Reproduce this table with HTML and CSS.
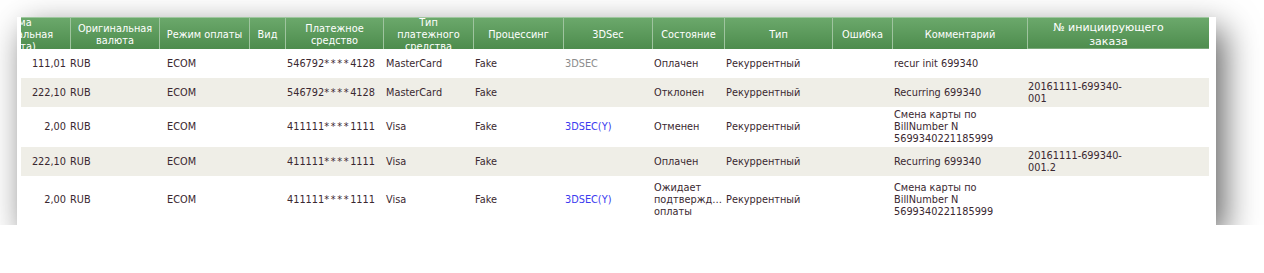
FILE: index.html
```html
<!DOCTYPE html>
<html lang="ru">
<head>
<meta charset="utf-8">
<title>Платежи</title>
<link rel="stylesheet" href="styles.css">
</head>
<body>
<div class="shot">
  <div class="table">
    <div class="head">
      <div class="th th-first"><span class="th-first-inner">Сумма (оригинальная валюта)</span></div>
      <div class="th">Оригинальная валюта</div>
      <div class="th">Режим оплаты</div>
      <div class="th">Вид</div>
      <div class="th">Платежное средство</div>
      <div class="th">Тип платежного средства</div>
      <div class="th">Процессинг</div>
      <div class="th">3DSec</div>
      <div class="th">Состояние</div>
      <div class="th">Тип</div>
      <div class="th">Ошибка</div>
      <div class="th">Комментарий</div>
      <div class="th th-order">№ инициирующего заказа</div>
    </div>
    <div class="body">
      <div class="row">
        <div class="td c-amount">111,01</div>
        <div class="td c-cur">RUB</div>
        <div class="td c-mode">ECOM</div>
        <div class="td"></div>
        <div class="td">546792<span class="mask">****</span>4128</div>
        <div class="td c-type">MasterCard</div>
        <div class="td">Fake</div>
        <div class="td sec-off">3DSEC</div>
        <div class="td">Оплачен</div>
        <div class="td">Рекуррентный</div>
        <div class="td"></div>
        <div class="td">recur init 699340</div>
        <div class="td c-order"></div>
      </div>
      <div class="row alt">
        <div class="td c-amount">222,10</div>
        <div class="td c-cur">RUB</div>
        <div class="td c-mode">ECOM</div>
        <div class="td"></div>
        <div class="td">546792<span class="mask">****</span>4128</div>
        <div class="td c-type">MasterCard</div>
        <div class="td">Fake</div>
        <div class="td"></div>
        <div class="td">Отклонен</div>
        <div class="td">Рекуррентный</div>
        <div class="td"></div>
        <div class="td">Recurring 699340</div>
        <div class="td c-order">20161111-699340-001</div>
      </div>
      <div class="row">
        <div class="td c-amount">2,00</div>
        <div class="td c-cur">RUB</div>
        <div class="td c-mode">ECOM</div>
        <div class="td"></div>
        <div class="td">411111<span class="mask">****</span>1111</div>
        <div class="td c-type">Visa</div>
        <div class="td">Fake</div>
        <div class="td sec-on">3DSEC(Y)</div>
        <div class="td">Отменен</div>
        <div class="td">Рекуррентный</div>
        <div class="td"></div>
        <div class="td">Смена карты по BillNumber N 5699340221185999</div>
        <div class="td c-order"></div>
      </div>
      <div class="row alt">
        <div class="td c-amount">222,10</div>
        <div class="td c-cur">RUB</div>
        <div class="td c-mode">ECOM</div>
        <div class="td"></div>
        <div class="td">411111<span class="mask">****</span>1111</div>
        <div class="td c-type">Visa</div>
        <div class="td">Fake</div>
        <div class="td"></div>
        <div class="td">Оплачен</div>
        <div class="td">Рекуррентный</div>
        <div class="td"></div>
        <div class="td">Recurring 699340</div>
        <div class="td c-order">20161111-699340-001.2</div>
      </div>
      <div class="row tall">
        <div class="td c-amount">2,00</div>
        <div class="td c-cur">RUB</div>
        <div class="td c-mode">ECOM</div>
        <div class="td"></div>
        <div class="td">411111<span class="mask">****</span>1111</div>
        <div class="td c-type">Visa</div>
        <div class="td">Fake</div>
        <div class="td sec-on">3DSEC(Y)</div>
        <div class="td c-state"><span class="line">Ожидает</span><span class="line clip">подтверждения</span><span class="line">оплаты</span></div>
        <div class="td">Рекуррентный</div>
        <div class="td"></div>
        <div class="td">Смена карты по BillNumber N 5699340221185999</div>
        <div class="td c-order"></div>
      </div>
    </div>
  </div>
</div>
</body>
</html>
```

FILE: styles.css
```css
html, body {
  margin: 0;
  padding: 0;
  background: #ffffff;
}

body {
  font-family: "DejaVu Sans", Verdana, sans-serif;
  font-size: 9.75px;
  line-height: 12px;
  color: #3a2830;
}

.shot {
  margin: 17px 0 0 17px;
  width: 1199px;
  height: 208px;
  box-sizing: border-box;
  padding-left: 4px;
  background: #ffffff;
  overflow: hidden;
  box-shadow: 8px 12px 32px rgba(0, 0, 0, 0.62);
}

.table {
  width: 1188px;
}

.head,
.row {
  display: grid;
  grid-template-columns: 49px 89px 90px 36px 98px 90px 90px 89px 72px 108px 60px 135px 182px;
}

.head {
  height: 32px;
  background: linear-gradient(#6ca96c, #4d8c4d);
  box-shadow: inset 0 1px 0 rgba(255, 255, 255, 0.35);
  color: #ffffff;
  overflow: hidden;
}

.th {
  display: flex;
  align-items: center;
  justify-content: center;
  text-align: center;
  box-sizing: border-box;
  padding: 4px 3px 0;
  height: 32px;
  overflow: hidden;
  border-left: 1px solid #9fc49f;
}

.th-first {
  border-left: none;
  justify-content: flex-start;
  padding: 4px 0 0;
}

.th-first-inner {
  flex: none;
  width: 88px;
  margin-left: -50px;
  text-align: center;
}

.th-order {
  font-size: 11px;
  line-height: 14px;
  padding: 4px 30px 0 10px;
  box-shadow: inset 0 -2px 0 -1px rgba(255, 255, 255, 0.25);
}

.body {
  box-shadow: inset 1px 0 0 #e2e2e2, inset -1px 0 0 #e2e2e2;
}

.row {
  min-height: 29px;
  align-items: center;
  background: #ffffff;
}

.row.alt {
  background: #efeee7;
}

.row.tall {
  min-height: 48px;
}

.td {
  box-sizing: border-box;
  padding: 2px 2px;
  min-width: 0;
}

.c-amount {
  text-align: right;
  padding-right: 4px;
}

.c-cur {
  padding-left: 0;
}

.c-mode {
  padding-left: 8px;
}

.c-type {
  padding-left: 3px;
}

.c-state {
  overflow: hidden;
}

.c-order {
  padding-left: 1px;
  padding-right: 80px;
}

.mask {
  letter-spacing: 1.6px;
}

.sec-off {
  color: #8c8c8c;
}

.sec-on {
  color: #3b3bef;
}

.line {
  display: block;
}

.clip {
  white-space: nowrap;
  overflow: hidden;
  text-overflow: ellipsis;
}
```
